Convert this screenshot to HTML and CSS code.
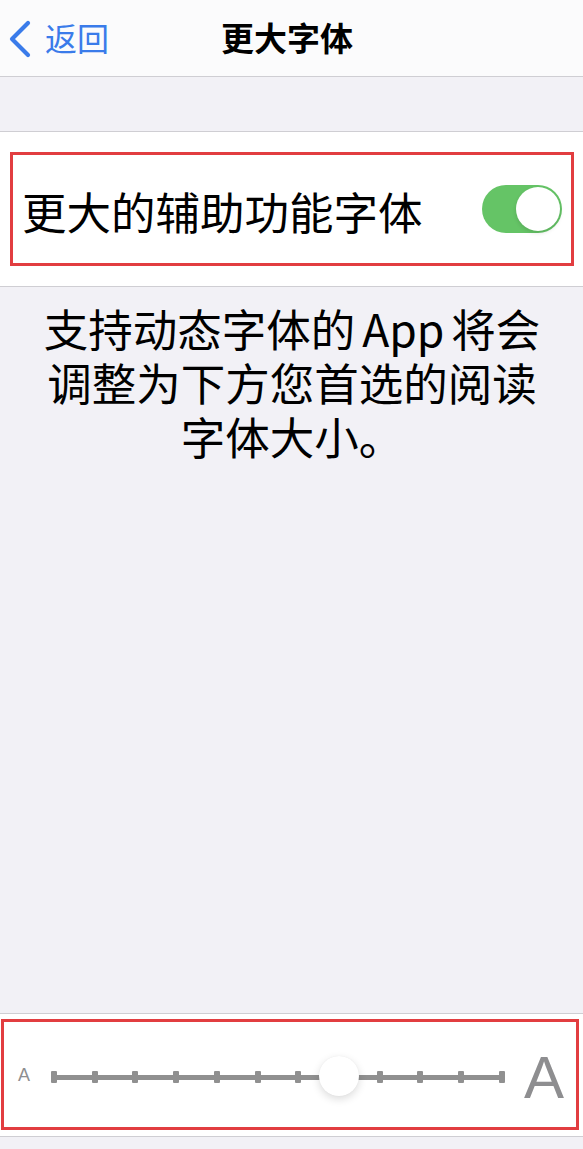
FILE: index.html
```html
<!DOCTYPE html>
<html lang="zh-CN">
<head>
<meta charset="utf-8">
<title>更大字体</title>
<link rel="stylesheet" href="styles.css">
</head>
<body>
<div class="page">
  <header class="nav">
    <div class="back">
      <svg class="chev" width="24" height="38" viewBox="0 0 24 38">
        <path d="M20 3 L4 19 L20 35" fill="none" stroke="#3a7bea" stroke-width="4.2" stroke-linecap="round" stroke-linejoin="round"/>
      </svg>
      <span class="back-label">返回</span>
    </div>
    <div class="title">更大字体</div>
  </header>
  <div class="spacer"></div>
  <section class="cell">
    <div class="mark row">
      <span class="label">更大的辅助功能字体</span>
      <span class="toggle"><span class="knob"></span></span>
    </div>
  </section>
  <div class="desc">
    <p>支持动态字体的 App 将会<br>调整为下方您首选的阅读<br>字体大小。</p>
  </div>
  <section class="slider-cell">
    <div class="mark slider-row">
      <span class="a-small">A</span>
      <div class="track">
        <span class="tick"></span><span class="tick"></span><span class="tick"></span><span class="tick"></span>
        <span class="tick"></span><span class="tick"></span><span class="tick"></span><span class="tick"></span>
        <span class="tick"></span><span class="tick"></span><span class="tick"></span><span class="tick"></span>
        <span class="thumb"></span>
      </div>
      <span class="a-large">A</span>
    </div>
  </section>
  <div class="bottom"></div>
</div>
</body>
</html>
```

FILE: styles.css
```css
html, body {
  margin: 0;
  padding: 0;
}
body {
  background: #f2f1f6;
  font-family: "Noto Sans CJK SC", "Noto Sans", sans-serif;
  color: #000;
}
.page {
  width: 583px;
  height: 1149px;
  display: flex;
  flex-direction: column;
  overflow: hidden;
}
.nav {
  height: 76px;
  flex: none;
  background: #fbfbfc;
  border-bottom: 1px solid #cfced3;
  display: flex;
  align-items: center;
}
.back {
  display: flex;
  align-items: center;
  padding-left: 8px;
  gap: 13px;
}
.chev {
  display: block;
  margin-top: 1px;
}
.back-label {
  font-size: 32px;
  line-height: 40px;
  color: #3a7bea;
  margin-top: -2px;
}
.title {
  margin-left: 112px;
  font-size: 33px;
  font-weight: 700;
  line-height: 40px;
  margin-top: -2px;
}
.spacer {
  height: 54px;
  flex: none;
  border-bottom: 1px solid #cfced3;
}
.cell {
  flex: none;
  background: #fff;
  height: 155px;
  border-bottom: 1px solid #cfced3;
  padding: 20px 9px 0 10px;
  box-sizing: border-box;
}
.mark {
  border: 3px solid #e23d40;
  box-sizing: border-box;
}
.row {
  height: 114px;
  display: flex;
  align-items: center;
  justify-content: space-between;
  padding: 0 9px 0 9px;
}
.label {
  font-size: 44.5px;
  line-height: 54px;
  margin-top: 4px;
}
.toggle {
  width: 80px;
  height: 48px;
  border-radius: 24px;
  background: #65c466;
  display: flex;
  align-items: center;
  justify-content: flex-end;
  padding: 0 2px;
  box-sizing: border-box;
}
.knob {
  width: 44px;
  height: 44px;
  border-radius: 50%;
  background: #fff;
  box-shadow: 0 2px 4px rgba(0,0,0,0.12);
}
.desc {
  flex: 1;
  border-bottom: 1px solid #cfced3;
}
.desc p {
  margin: 0;
  padding-top: 14px;
  text-align: center;
  font-size: 44.5px;
  line-height: 54px;
  word-spacing: -3px;
  margin-left: 1px;
}
.slider-cell {
  flex: none;
  height: 123px;
  background: #fff;
  border-bottom: 1px solid #cfced3;
  padding: 5px 4px 0 1px;
  box-sizing: border-box;
}
.slider-row {
  height: 111px;
  display: flex;
  align-items: center;
  padding-left: 14px;
}
.a-small {
  font-family: "Liberation Sans", Arial, sans-serif;
  font-size: 18px;
  line-height: 18px;
  color: #8e8e90;
  margin-top: 1px;
  width: 12px;
}
.track {
  position: relative;
  margin-left: 21px;
  width: 454px;
  height: 12px;
  margin-top: 5px;
  display: flex;
  justify-content: space-between;
  align-items: center;
  background: linear-gradient(#909090, #909090) center / 100% 5px no-repeat;
}
.tick {
  width: 6px;
  height: 12px;
  background: #909090;
  border-radius: 1px;
}
.thumb {
  position: absolute;
  left: 268px;
  top: -15px;
  width: 40px;
  height: 40px;
  border-radius: 50%;
  background: #fff;
  box-shadow: 0 3px 8px rgba(0,0,0,0.14), 0 0 1px rgba(0,0,0,0.08);
}
.a-large {
  font-family: "Liberation Sans", Arial, sans-serif;
  font-size: 60px;
  line-height: 60px;
  color: #8e8e90;
  margin-left: 19px;
  margin-top: 6px;
}
.bottom {
  height: 12px;
  flex: none;
}
```
